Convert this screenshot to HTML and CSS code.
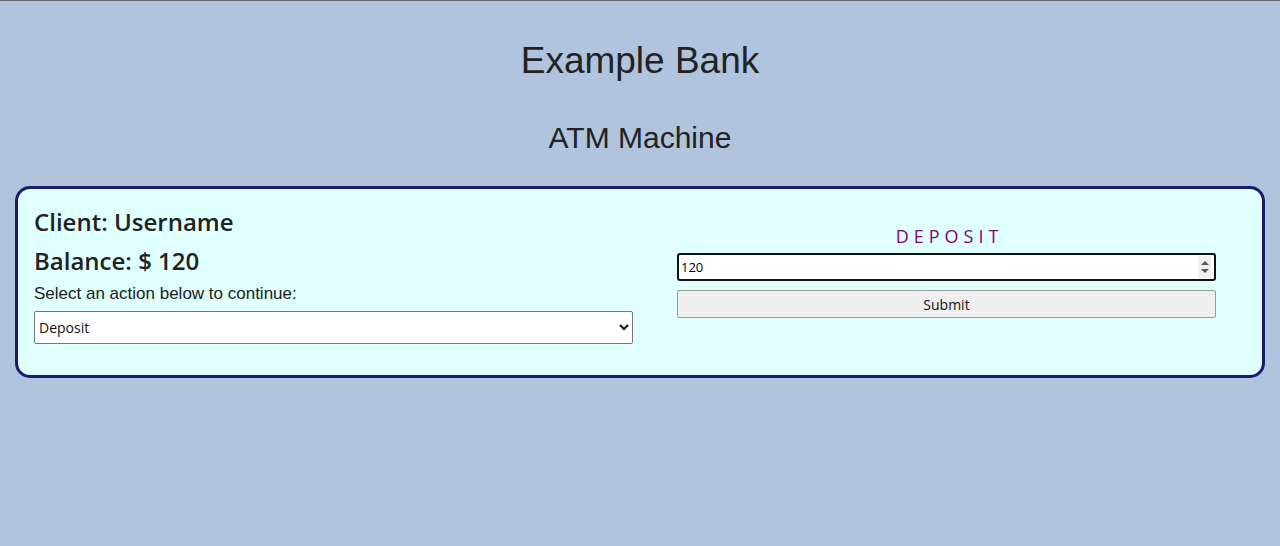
FILE: index.html
```html
<!DOCTYPE html>
<html>
<head>
<meta charset="utf-8">
<link rel="stylesheet" href="styles.css">
</head>
<body>
<h1 class="bank">Example Bank</h1>
<h2 class="atm">ATM Machine</h2>
<div class="card">
  <div class="left">
    <h3 class="client">Client: Username</h3>
    <h3 class="balance">Balance: $ 120</h3>
    <label class="prompt" for="act">Select an action below to continue:</label>
    <select id="act" class="action">
      <option>Deposit</option>
      <option>Withdraw</option>
    </select>
  </div>
  <div class="right">
    <div class="op">DEPOSIT</div>
    <div class="amount-wrap">
      <input class="amount" type="number" value="120">
      <span class="spin"><span class="up"></span><span class="down"></span></span>
    </div>
    <button class="submit">Submit</button>
  </div>
</div>
</body>
</html>
```

FILE: styles.css
```css
html, body {
  margin: 0;
  padding: 0;
}
body {
  background: #b0c4de;
  border-top: 1px solid #666a70;
  height: 545px;
  font-family: "Liberation Sans", Arial, sans-serif;
  color: #222;
}
.bank {
  margin: 0;
  padding-top: 38px;
  text-align: center;
  font-weight: normal;
  font-size: 37px;
  line-height: 44px;
}
.atm {
  margin: 0;
  padding-top: 37px;
  text-align: center;
  font-weight: normal;
  font-size: 30px;
  line-height: 36px;
}
.card {
  margin: 30px 15px 0 15px;
  background: #e0ffff;
  border: 3px solid #191970;
  border-radius: 15px;
  display: flex;
  padding: 15px 16px 31px 16px;
}
.left {
  width: 600px;
  display: flex;
  flex-direction: column;
}
.client, .balance {
  margin: 0;
  font-family: "Open Sans", "Noto Sans", sans-serif;
  font-weight: 600;
  font-size: 24px;
  line-height: 36px;
  color: #222;
}
.balance {
  margin-top: 3px;
}
.prompt {
  font-size: 17px;
  line-height: 20px;
  margin-top: 5px;
}
.action {
  margin-top: 7px;
  height: 33px;
  width: 599px;
  font-family: "Open Sans", "Noto Sans", sans-serif;
  font-size: 14px;
  border: 1px solid #767676;
  border-radius: 2px;
  background: #fff;
  color: #111;
  padding: 0;
}
.right {
  flex: 1;
  display: flex;
  flex-direction: column;
  align-items: flex-start;
  padding-left: 43px;
}
.op {
  width: 540px;
  text-align: center;
  color: #800080;
  font-family: "Open Sans", "Noto Sans", sans-serif;
  font-size: 18px;
  letter-spacing: 5px;
  line-height: 24px;
  margin-top: 20px;
  padding-left: 5px;
  box-sizing: border-box;
}
.amount-wrap {
  position: relative;
  margin-top: 5px;
  width: 539px;
  height: 28px;
}
.amount {
  width: 539px;
  height: 28px;
  box-sizing: border-box;
  border: 2px solid #111;
  border-radius: 3px;
  font-family: "Open Sans", "Noto Sans", sans-serif;
  font-size: 13px;
  padding: 0 2px;
  background: #fff;
  -moz-appearance: textfield;
}
.amount::-webkit-inner-spin-button,
.amount::-webkit-outer-spin-button {
  -webkit-appearance: none;
  margin: 0;
}
.spin {
  position: absolute;
  right: 5px;
  top: 3px;
  width: 13px;
  height: 22px;
  background: #f0f0f0;
  display: flex;
  flex-direction: column;
  align-items: center;
  justify-content: center;
  gap: 4px;
}
.up, .down {
  width: 0;
  height: 0;
  border-left: 4px solid transparent;
  border-right: 4px solid transparent;
}
.up {
  border-bottom: 4px solid #555;
}
.down {
  border-top: 4px solid #555;
}
.submit {
  margin-top: 9px;
  width: 539px;
  height: 28px;
  box-sizing: border-box;
  border: 1px solid #999;
  border-radius: 2px;
  background: #efefef;
  font-family: "Open Sans", "Noto Sans", sans-serif;
  font-size: 14px;
  color: #111;
}
```
